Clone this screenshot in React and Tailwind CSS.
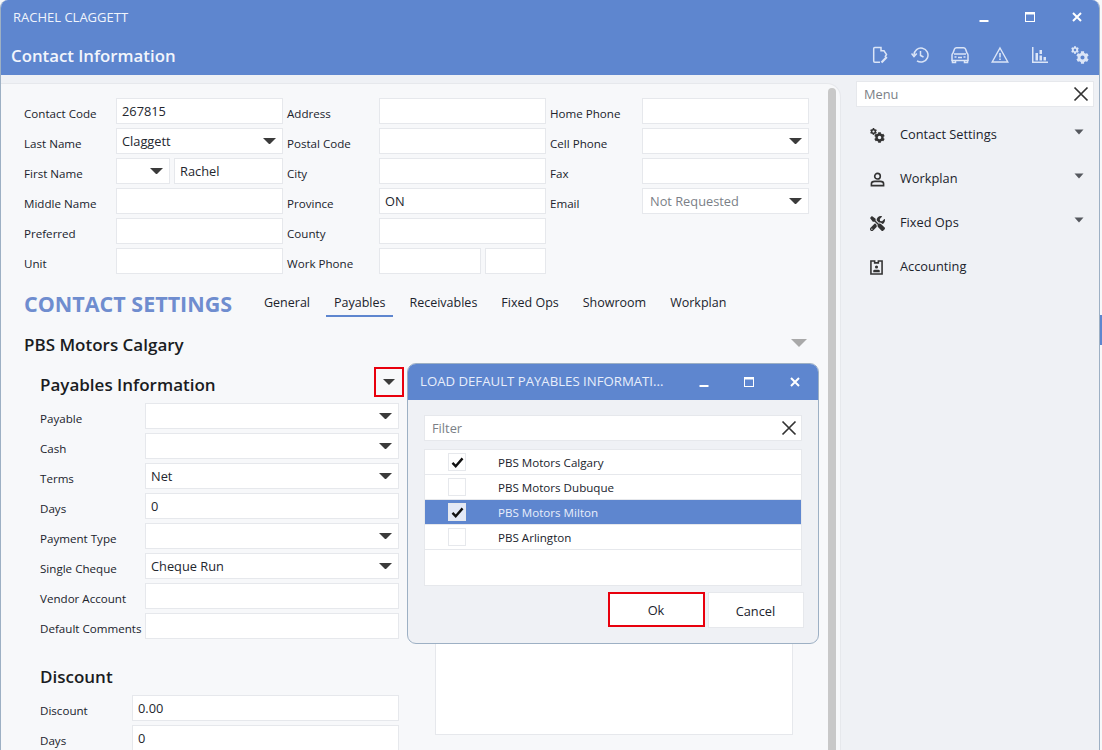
import React from "react";
import { FaCog, FaTools } from "react-icons/fa";

const Caret = ({ className = "" }) => (
  <svg viewBox="0 0 14 7" className={`${className || "w-[12px] h-[6px]"}`}><path d="M0 0H14L7 7Z" fill="currentColor" /></svg>
);

const Box = ({ value, caret, className = "", textClass = "" }) => (
  <div className={`h-[26px] border border-[#e6e8ec] bg-white flex items-center justify-between pl-[5px] pr-[6px] text-[12.8px] leading-[16px] text-[#23262e] ${className}`}>
    <span className={textClass}>{value}</span>
    {caret && <Caret className="w-[13px] h-[6.5px] text-[#3b3b3b]" />}
  </div>
);

const Row = ({ label, labelW, children }) => (
  <div className="flex h-[26px]">
    <div style={{ width: labelW }} className="shrink-0 pt-[8px] text-[11.6px] leading-[16px] text-[#20232c] whitespace-nowrap">{label}</div>
    <div className="flex-1 flex gap-[4px] min-w-0">{children}</div>
  </div>
);

const Gears = ({ big, small, className = "" }) => (
  <span className={`relative inline-block ${className}`} style={{ width: big + small - 3, height: big + small - 3 }}>
    <FaCog size={small} className="absolute left-0 top-0" />
    <FaCog size={big} className="absolute right-0 bottom-0" />
  </span>
);

const WinBtns = ({ mx, cx }) => (
  <>
    <svg viewBox="0 0 10 10" className="w-[10px] h-[10px]"><path d="M0.5 8H9.5V10H0.5Z" fill="#fff" /></svg>
    <svg viewBox="0 0 10 10" className={`w-[10px] h-[10px] ${mx}`}><path d="M0 0H10V10H0ZM1 2.5V9H9V2.5Z" fill="#fff" fillRule="evenodd" /></svg>
    <svg viewBox="0 0 10 10" className={`w-[10px] h-[10px] ${cx}`}><path d="M1 1L9 9M9 1L1 9" stroke="#fff" strokeWidth="2" /></svg>
  </>
);

const X = ({ className = "" }) => (
  <svg viewBox="0 0 16 16" className={`w-[16px] h-[16px] ${className}`}><path d="M1.5 1.5L14.5 14.5M14.5 1.5L1.5 14.5" stroke="#333" strokeWidth="1.7" /></svg>
);

const Check = () => (
  <svg viewBox="0 0 14 12" className="w-[13px] h-[11px]"><path d="M1.5 6.5L5 10L12.5 1.5" stroke="#111" strokeWidth="2.6" fill="none" /></svg>
);

const tb = "w-[18px] h-[18px]";
const toolbar = [
  <svg key="a" viewBox="0 0 18 18" className={tb} fill="none" stroke="#dbe5f7" strokeWidth="1.5"><path d="M9 16.2H3.8Q2.7 16.2 2.7 15V2.6Q2.7 1.5 3.8 1.5H10V4.8H13L15.5 8.5L14 11" /><path d="M10.5 16.5L15.8 11" strokeWidth="2.2" /></svg>,
  <svg key="b" viewBox="0 0 18 18" className={tb} fill="none" stroke="#dbe5f7" strokeWidth="1.5"><path d="M3 9A7 7 0 1 1 6 14.8" /><path d="M0.5 7.5L3 10.5L5.8 7.5" /><path d="M9.5 5V9.5L12.5 11" /></svg>,
  <svg key="c" viewBox="0 0 18 18" className={tb} fill="none" stroke="#dbe5f7"><path d="M1 9Q1 8 2 7L3.5 3Q4 1.8 5.5 1.8H12.5Q14 1.8 14.5 3L16 7Q17 8 17 9V14.5H1Z" strokeWidth="1.5" /><path d="M1.5 14V16.5H4.5V14M13.5 14V16.5H16.5V14" strokeWidth="1.5" /><path d="M3 8H15" strokeWidth="1.5" /><path d="M3.5 11H5.5M12.5 11H14.5M7 11.5H11" strokeWidth="1.5" /></svg>,
  <svg key="d" viewBox="0 0 18 18" className={tb} fill="none" stroke="#dbe5f7" strokeWidth="1.4"><path d="M9 2L16.8 16H1.2Z" /><path d="M9 7V11.5M9 12.5V14" strokeWidth="1.6" /></svg>,
  <svg key="e" viewBox="0 0 18 18" className={tb} fill="#dbe5f7"><path d="M1 1H2.5V15.5H17V17H1Z" /><path d="M4.5 7H7V14.5H4.5ZM8.5 9.5H11V14.5H8.5ZM8.5 4H11V8H8.5ZM12.5 11H15V14.5H12.5Z" /></svg>,
];

const Menu = ({ icon, label, chevron }) => (
  <div className="relative flex items-center h-[44px] pl-[14px] text-[12.8px] text-[#20232c]">
    <span className="w-[30px] flex items-center text-[#333]">{icon}</span>
    <span>{label}</span>
    {chevron && (
      <svg viewBox="0 0 10 6" className="absolute left-[218px] top-[16px] w-[10px] h-[6px]"><path d="M0.5 0.5H9.5L5 5.5Z" fill="#55585e" /></svg>
    )}
  </div>
);

const Check2 = ({ checked, selected }) => (
  <div className={`w-[18px] h-[18px] border border-[#e6e8ec] flex items-center justify-center ${selected ? "bg-[#e3e9f7]" : "bg-white"}`}>
    {checked && <Check />}
  </div>
);

const ListRow = ({ label, checked, selected }) => (
  <div className={`h-[25px] flex items-center pl-[23px] border-b border-[#e6e8ec] ${selected ? "bg-[#5e86cf] text-[#e8eefb]" : "bg-white text-[#20232c]"}`}>
    <Check2 checked={checked} selected={selected} />
    <span className="ml-[32px] pt-[1px] text-[11.6px]">{label}</span>
  </div>
);

export default function App() {
  const font = { fontFamily: '"Open Sans", "Noto Sans", sans-serif' };
  return (
    <div style={font} className="relative w-[1102px] h-[750px] overflow-hidden bg-[#f7f8fa]">
      <div className="absolute right-0 top-[315px] w-[2px] h-[30px] bg-[#5e86cf]" />
      <div className="w-[1100px] h-[750px] flex flex-col border-r border-l border-[#9db0c4] rounded-t-[8px] overflow-hidden">
        <header className="h-[75px] shrink-0 bg-[#5e86cf] text-white">
          <div className="h-[35px] flex items-center pl-[12px]">
            <span className="text-[13px] text-[#f0f4fc]">RACHEL CLAGGETT</span>
            <div className="ml-auto flex items-center pr-[17px] pb-[1px]">
              <WinBtns mx="ml-[36px]" cx="ml-[37px]" />
            </div>
          </div>
          <div className="h-[40px] flex items-center pl-[10px]">
            <span className="pt-[2px] text-[16.8px] font-semibold text-[#f2f5fc]">Contact Information</span>
            <div className="ml-auto flex items-center gap-[22px] pr-[10px] text-[#dbe5f7]">
              {toolbar}
              <Gears big={13} small={8} />
            </div>
          </div>
        </header>
        <div className="flex-1 flex bg-[#eff1f5] min-h-0">
          <main className="relative w-[840px] shrink-0 mt-[8px] bg-[#f7f8fa] border-t border-r border-[#e6e8ec] rounded-tr-[14px] pl-[23px] pt-[14px]">
            <div className="absolute left-[827px] top-[4px] w-[8px] h-[700px] rounded-t-[5px] bg-[#c8c8c8]" />
            <div className="grid grid-cols-[263px_263px_259px] gap-y-[4px]">
              <Row label="Contact Code" labelW={92}><Box value="267815" className="w-[167px]" /></Row>
              <Row label="Address" labelW={92}><Box className="w-[167px]" /></Row>
              <Row label="Home Phone" labelW={92}><Box className="w-[167px]" /></Row>
              <Row label="Last Name" labelW={92}><Box value="Claggett" caret className="w-[167px]" /></Row>
              <Row label="Postal Code" labelW={92}><Box className="w-[167px]" /></Row>
              <Row label="Cell Phone" labelW={92}><Box caret className="w-[167px]" /></Row>
              <Row label="First Name" labelW={92}><Box caret className="w-[54px]" /><Box value="Rachel" className="w-[109px]" /></Row>
              <Row label="City" labelW={92}><Box className="w-[167px]" /></Row>
              <Row label="Fax" labelW={92}><Box className="w-[167px]" /></Row>
              <Row label="Middle Name" labelW={92}><Box className="w-[167px]" /></Row>
              <Row label="Province" labelW={92}><Box value="ON" className="w-[167px]" /></Row>
              <Row label="Email" labelW={92}><Box value="Not Requested" caret className="w-[167px]" textClass="text-[#7b7f87] pl-[2px]" /></Row>
              <Row label="Preferred" labelW={92}><Box className="w-[167px]" /></Row>
              <Row label="County" labelW={92}><Box className="w-[167px]" /></Row>
              <div />
              <Row label="Unit" labelW={92}><Box className="w-[167px]" /></Row>
              <Row label="Work Phone" labelW={92}><Box className="w-[102px]" /><Box className="w-[61px]" /></Row>
            </div>

            <div className="flex items-start mt-[14px] h-[43px]">
              <h1 className="w-[232px] pt-[1px] text-[21.5px] leading-[30px] font-bold text-[#6f8dcf] whitespace-nowrap">CONTACT SETTINGS</h1>
              <nav className="flex text-[12.5px] mt-[2px] text-[#20232c]">
                {["General", "Payables", "Receivables", "Fixed Ops", "Showroom", "Workplan"].map((t) => (
                  <div key={t} className={`h-[27px] flex items-center pt-[2px] px-[8px] mr-[8px] border-b-2 ${t === "Payables" ? "border-[#5e86cf] font-medium" : "border-transparent"}`}>{t}</div>
                ))}
              </nav>
            </div>

            <div className="flex items-center h-[28px] w-[783px] justify-between">
              <h2 className="text-[17px] font-semibold text-[#1a1c22]">PBS Motors Calgary</h2>
              <Caret className="w-[16px] h-[8px] text-[#a9a9a9] mb-[4px]" />
            </div>

            <div className="flex mt-[8px]">
              <section className="w-[359px] ml-[16px] shrink-0">
                <div className="flex items-center justify-between h-[30px]">
                  <h3 className="pt-[6px] text-[17px] font-semibold text-[#1a1c22]">Payables Information</h3>
                  <div className="w-[30px] h-[30px] mr-[-5px] border-2 border-[#e8000d] flex items-center justify-center">
                    <Caret className="w-[12px] h-[6px] text-[#3b3b3b]" />
                  </div>
                </div>
                <div className="flex flex-col gap-[4px] mt-[6px]">
                  <Row label="Payable" labelW={105}><Box caret className="flex-1" /></Row>
                  <Row label="Cash" labelW={105}><Box caret className="flex-1" /></Row>
                  <Row label="Terms" labelW={105}><Box value="Net" caret className="flex-1" /></Row>
                  <Row label="Days" labelW={105}><Box value="0" className="flex-1" /></Row>
                  <Row label="Payment Type" labelW={105}><Box caret className="flex-1" /></Row>
                  <Row label="Single Cheque" labelW={105}><Box value="Cheque Run" caret className="flex-1" /></Row>
                  <Row label="Vendor Account" labelW={105}><Box className="flex-1" /></Row>
                  <Row label="Default Comments" labelW={105}><Box className="flex-1" /></Row>
                </div>
                <h3 className="mt-[24px] h-[30px] text-[17px] leading-[28px] font-semibold text-[#1a1c22]">Discount</h3>
                <div className="flex flex-col gap-[4px] mt-[2px]">
                  <Row label="Discount" labelW={92}><Box value="0.00" className="flex-1" /></Row>
                  <Row label="Days" labelW={92}><Box value="0" className="flex-1" /></Row>
                </div>
              </section>
              <div className="ml-[36px] mt-[260px] w-[358px] h-[108px] bg-white border border-[#e6e8ec]" />
            </div>

            <div className="absolute left-[406px] top-[279px] w-[412px] h-[281px] rounded-[9px] border border-[#9db0c4] bg-[#eff1f5] overflow-hidden">
              <div className="h-[36px] bg-[#5e86cf] flex items-center pl-[12px] text-[13.2px] text-[#e8eefb]">
                <span className="w-[279px] whitespace-nowrap">LOAD DEFAULT PAYABLES INFORMATI...</span>
                <WinBtns mx="ml-[35px]" cx="ml-[36px]" />
              </div>
              <div className="ml-[16px] mt-[15px] w-[378px] h-[26px] bg-white border border-[#e6e8ec] flex items-center justify-between pl-[7px] pr-[4px] text-[12.8px] text-[#7b7f87]">
                <span className="pt-[2px]">Filter</span><X />
              </div>
              <div className="ml-[16px] mt-[8px] w-[378px] h-[137px] bg-white border border-[#e6e8ec]">
                <ListRow label="PBS Motors Calgary" checked />
                <ListRow label="PBS Motors Dubuque" />
                <ListRow label="PBS Motors Milton" checked selected />
                <ListRow label="PBS Arlington" />
              </div>
              <div className="flex justify-end gap-[3px] mt-[6px] pr-[14px] text-[12.8px] text-[#20232c]">
                <div className="w-[97px] h-[35px] pt-[3px] pr-[1px] bg-white border-2 border-[#e8000d] flex items-center justify-center">Ok</div>
                <div className="w-[96px] h-[36px] pt-[3px] pr-[1px] bg-white border border-[#e6e8ec] flex items-center justify-center">Cancel</div>
              </div>
            </div>
          </main>

          <aside className="flex-1 pl-[15px] pt-[6px]">
            <div className="w-[238px] h-[26px] bg-white border border-[#e6e8ec] flex items-center justify-between pl-[7px] pr-[4px] text-[12.8px] text-[#7b7f87]">
              <span className="pt-[1px]">Menu</span><X />
            </div>
            <div className="mt-[6px] flex flex-col">
              <Menu chevron label="Contact Settings" icon={<Gears big={11} small={7} />} />
              <Menu chevron label="Workplan" icon={<svg viewBox="0 0 16 16" className="w-[15px] h-[15px]" fill="none" stroke="#333" strokeWidth="1.7"><circle cx="8" cy="4.5" r="3" /><path d="M1.5 14.5V12.5Q1.5 10 5 10H11Q14.5 10 14.5 12.5V14.5Z" /></svg>} />
              <Menu chevron label="Fixed Ops" icon={<FaTools size={15} />} />
              <Menu label="Accounting" icon={<svg viewBox="0 0 14 16" className="w-[13px] h-[15px]" fill="none"><path d="M1 1H5V3H9V1H13V15H1Z" stroke="#333" strokeWidth="1.7" /><circle cx="7" cy="7.5" r="1.7" fill="#333" /><path d="M3.5 13V11.5Q3.5 10.5 5 10.5H9Q10.5 10.5 10.5 11.5V13Z" fill="#333" /></svg>} />
            </div>
          </aside>
        </div>
      </div>
    </div>
  );
}
